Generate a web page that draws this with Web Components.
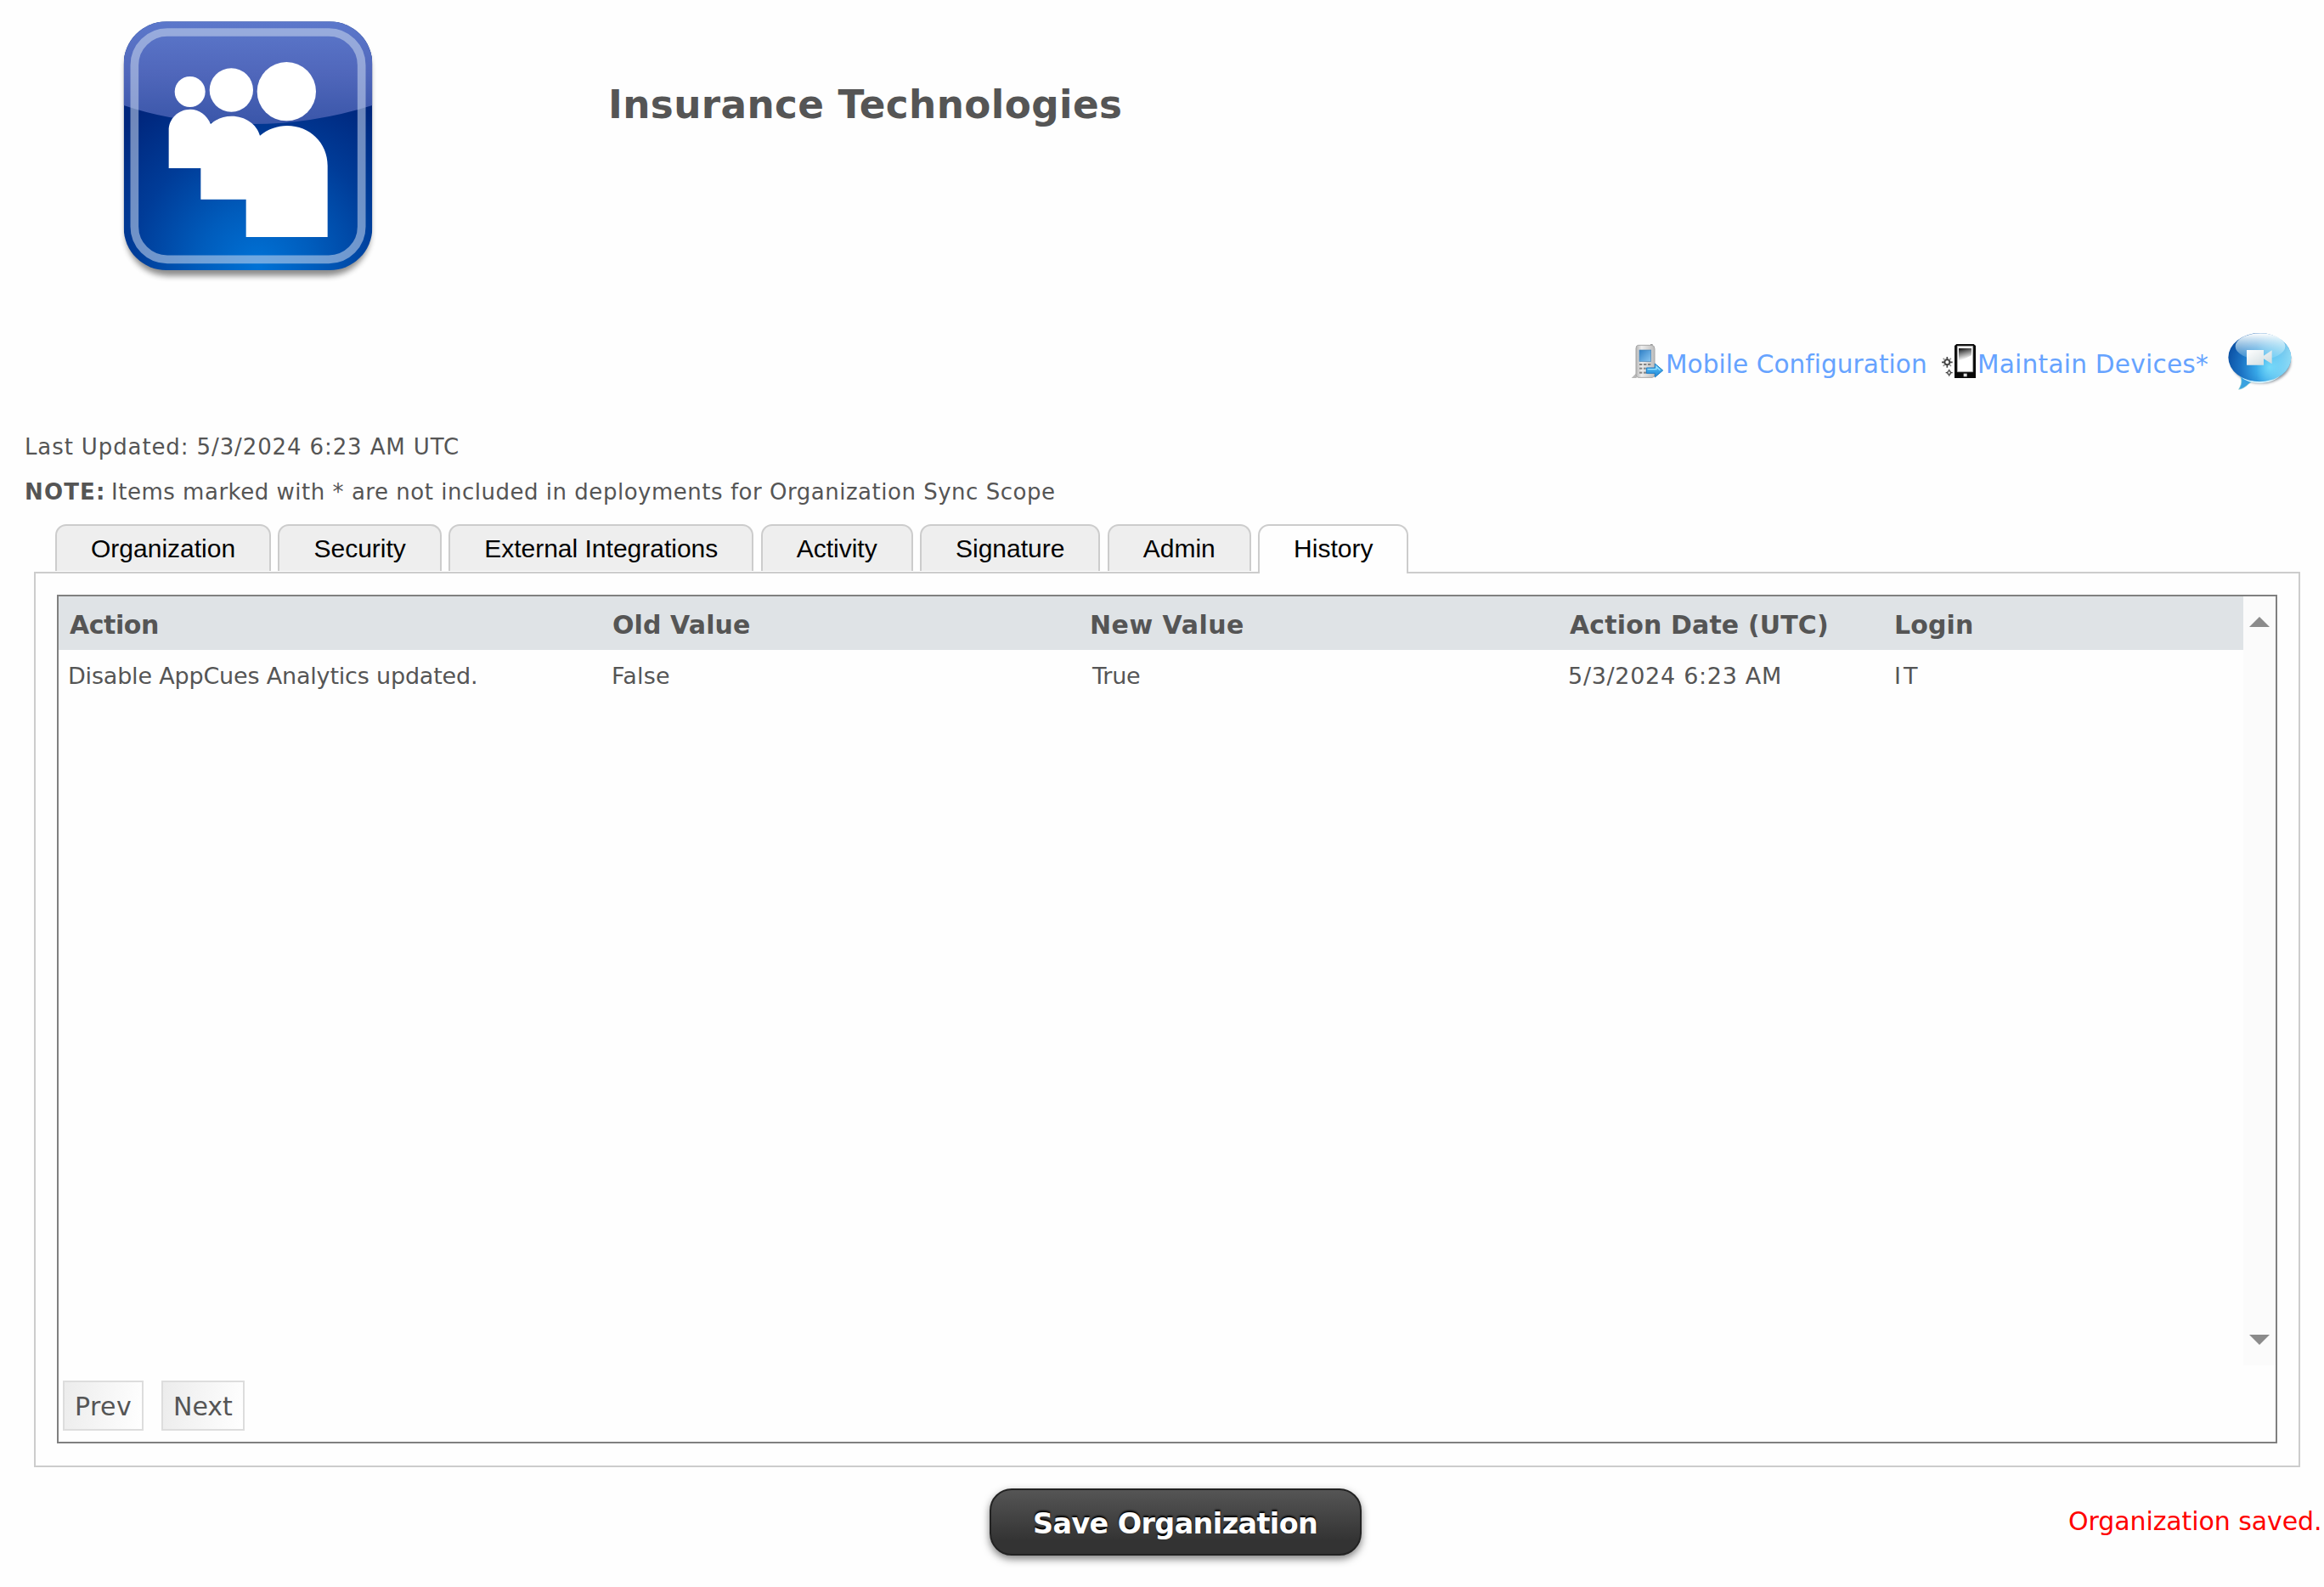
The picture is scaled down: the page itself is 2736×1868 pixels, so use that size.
<!DOCTYPE html>
<html lang="en">
<head>
<meta charset="utf-8">
<title>Insurance Technologies</title>
<style>
html,body{margin:0;padding:0;background:#fefefe}
body{width:2736px;height:1868px;overflow:hidden;font-family:Verdana,"DejaVu Sans",sans-serif;color:#555}
</style>
</head>
<body>
<org-page></org-page>
<script>
const define = (name, html, ready) => {
  const t = document.createElement('template');
  t.innerHTML = html;
  customElements.define(name, class extends HTMLElement {
    connectedCallback() {
      if (this.shadowRoot) return;
      this.attachShadow({mode: 'open'}).append(t.content.cloneNode(true));
      if (ready) ready(this);
    }
  });
};
const ctx = document.createElement('canvas').getContext('2d');

/* Single line of text whose tracking is adjusted so that its ink spans `w` pixels. */
define('fit-text', `<style>:host{display:block;white-space:pre;flex:none}span{display:block}</style><span><slot></slot></span>`, el => {
  const size = +el.getAttribute('size'), w = +el.getAttribute('w'), text = el.textContent;
  const family = el.getAttribute('family') || '"DejaVu Sans"';
  const bold = el.hasAttribute('bold') ? 'bold' : 'normal';
  ctx.font = `${bold} ${size}px ${family}, sans-serif`;
  const m = ctx.measureText(text);
  const ls = (w - (m.actualBoundingBoxRight + m.actualBoundingBoxLeft)) / (text.length - 1);
  el.style.cssText += `;width:${w}px;font:${bold} ${size}px/${el.getAttribute('line') || 40}px ${family},sans-serif;letter-spacing:${ls}px`;
  el.shadowRoot.querySelector('span').style.marginLeft = m.actualBoundingBoxLeft + 'px';
});

define('org-logo', `<style>:host{display:block;width:330px;height:330px}svg{display:block}</style>
<svg width="330" height="330" viewBox="0 0 990 990">
<defs>
<radialGradient id="b" gradientUnits="userSpaceOnUse" cx="520" cy="910" r="680"><stop offset="0" stop-color="#0072d6"/><stop offset=".3" stop-color="#005cbc"/><stop offset=".65" stop-color="#003c98"/><stop offset="1" stop-color="#00267c"/></radialGradient>
<linearGradient id="g" x1="0" y1="0" x2="0" y2="1"><stop offset="0" stop-color="#5c78cb"/><stop offset=".5" stop-color="#5067bb"/><stop offset="1" stop-color="#3a56a9"/></linearGradient>
<clipPath id="c"><rect x="47" y="46" width="878" height="878" rx="150"/></clipPath>
<filter id="s" x="-10%" y="-10%" width="120%" height="120%"><feGaussianBlur stdDeviation="11"/></filter>
</defs>
<rect x="54" y="66" width="864" height="878" rx="150" fill="#000" opacity=".45" filter="url(#s)"/>
<g clip-path="url(#c)"><rect x="47" y="46" width="878" height="878" fill="url(#b)"/>
<path d="M47 46H925V342Q710 410 486 408Q240 408 47 342Z" fill="url(#g)"/></g>
<rect x="85" y="84" width="802" height="802" rx="116" fill="none" stroke="#c8d6ee" stroke-opacity=".56" stroke-width="29"/>
<g fill="#fff"><circle cx="281" cy="294" r="54"/><circle cx="427" cy="288" r="77"/><circle cx="622" cy="293" r="104"/>
<path d="M206 564V430C206 389 240 356 282 356C314 356 341 377 354 408C374 390 400 380 428 380C476 380 517 408 528 449C556 426 590 414 624 414C704 414 767 474 767 555V807H479V674H319V564Z"/></g>
</svg>`);

define('phone-icon', `<style>:host{display:block;flex:none}svg{display:block}</style>
<svg width="39" height="40" viewBox="60 105 117 120">
<defs><linearGradient id="p"><stop offset="0" stop-color="#b5b5b5"/><stop offset=".3" stop-color="#ececec"/><stop offset="1" stop-color="#bdbdbd"/></linearGradient>
<linearGradient id="q" x1="0" y1="0" x2="1" y2="1"><stop offset="0" stop-color="#2e7fc6"/><stop offset="1" stop-color="#8cc8f2"/></linearGradient>
<linearGradient id="a" x1="0" y1="0" x2="0" y2="1"><stop offset="0" stop-color="#5cc6fa"/><stop offset="1" stop-color="#1e86d6"/></linearGradient></defs>
<path d="M62 225L80 207V225Z" fill="#999" opacity=".7"/><rect x="129" y="105" width="8" height="20" fill="#999"/>
<path d="M86 109H134Q144 110 144 122V212Q144 222 136 223H86Q78 222 78 212V120Q78 110 86 109Z" fill="url(#p)" stroke="#a6a6a6" stroke-width="3"/>
<rect x="90" y="126" width="41" height="40" fill="url(#q)" stroke="#4b86b8" stroke-width="2"/>
<g fill="#858585"><rect x="90" y="174" width="10" height="6"/><rect x="105" y="174" width="10" height="6"/><rect x="120" y="174" width="10" height="6"/><rect x="90" y="188" width="10" height="6"/><rect x="105" y="188" width="8" height="6"/><rect x="90" y="203" width="10" height="6"/><rect x="105" y="203" width="10" height="6"/></g>
<path d="M115 189H145V174L173 198L145 222V208H115Z" fill="url(#a)" stroke="#1c7bc4" stroke-width="3" stroke-linejoin="round"/><path d="M119 194H150V185L163 197" fill="none" stroke="#98e2ff" stroke-width="4"/>
</svg>`);

define('device-icon', `<style>:host{display:block;flex:none}svg{display:block}</style>
<svg width="40" height="40" viewBox="48 105 120 120">
<defs><linearGradient id="d" x1=".1" y1="0" x2=".35" y2="1"><stop offset="0" stop-color="#111"/><stop offset=".35" stop-color="#777"/><stop offset=".85" stop-color="#fff"/></linearGradient></defs>
<path d="M100 105H161L168 111V225H93V111Z" fill="#080808"/><path d="M103 112H158V203H103Z" fill="#fff"/><path d="M103 112H158V203H103Z" fill="none" stroke="#aaa" stroke-width="2"/><path d="M108 120H153V145L108 168Z" fill="url(#d)"/>
<rect x="125" y="209" width="12" height="11" fill="#ddd"/>
<g fill="none" stroke="#444"><circle cx="67" cy="169" r="9" stroke-width="6"/><path d="M67 150V160M67 178V188M48 169H58M76 169H86" stroke-width="5"/><path d="M53 155L60 162M74 176L81 183M81 155L74 162M60 176L53 183" stroke-width="4" stroke="#888"/>
<circle cx="74" cy="206" r="5.5" stroke-width="4.5" stroke="#666"/><path d="M74 194V201M74 211V218M62 206H69M79 206H86" stroke-width="4"/></g>
</svg>`);

define('chat-icon', `<style>:host{display:block;flex:none}svg{display:block}</style>
<svg width="80" height="74" viewBox="1050 57 240 222">
<defs><radialGradient id="r" gradientUnits="userSpaceOnUse" cx="1205" cy="190" r="155"><stop offset="0" stop-color="#62d2f8"/><stop offset=".3" stop-color="#38a8e8"/><stop offset=".65" stop-color="#1b73c4"/><stop offset="1" stop-color="#0b4fa2"/></radialGradient>
<linearGradient id="h" x1="0" y1="0" x2="0" y2="1"><stop offset="0" stop-color="#fff"/><stop offset="1" stop-color="#c6f4ff" stop-opacity=".15"/></linearGradient>
<linearGradient id="k" x1="0" y1="0" x2="1" y2="0"><stop offset=".45" stop-color="#9cecff" stop-opacity="0"/><stop offset="1" stop-color="#a8f0ff"/></linearGradient>
<linearGradient id="v" x1="0" y1="0" x2="1" y2="1"><stop offset="0" stop-color="#fff"/><stop offset="1" stop-color="#ccd9dd"/></linearGradient>
<filter id="f" x="-20%" y="-20%" width="140%" height="140%"><feGaussianBlur stdDeviation="5"/></filter></defs>
<ellipse cx="1176" cy="170" rx="105" ry="77" fill="#234" opacity=".5" filter="url(#f)"/>
<path d="M1103 222C1110 240 1106 252 1097 268C1120 265 1130 246 1150 236Z" fill="#3aa2e0" stroke="#8cc" stroke-width="2"/>
<ellipse cx="1171" cy="155" rx="111" ry="86" fill="url(#r)"/>
<ellipse cx="1171" cy="155" rx="111" ry="86" fill="url(#k)" opacity=".8"/>
<path d="M1102 222C1140 248 1210 246 1243 220C1210 254 1135 254 1102 222Z" fill="#d9f6ff"/>
<ellipse cx="1173" cy="116" rx="88" ry="46" fill="url(#h)"/>
<path d="M1125 129H1185V149L1214 130V178L1185 160V182H1125Z" fill="url(#v)"/>
</svg>`);

define('icon-link', `<style>:host{display:flex;align-items:center;color:#66a3ff;flex:none}.t{padding-top:8px}</style><slot name="icon"></slot><div class="t"><slot></slot></div>`);

define('org-tab', `<style>
:host{display:block;flex:none;box-sizing:border-box;height:55px;border:2px solid #ccc;border-bottom:0;border-radius:13px 13px 0 0;background:#eee;color:#000;padding:0 40px;font:30px/53px "Liberation Sans",Arial,sans-serif;white-space:nowrap}
:host([active]){height:58px;margin-bottom:-3px;background:#fefefe;position:relative;z-index:1}
</style><slot></slot>`);

define('pager-button', `<style>:host{display:block;box-sizing:border-box;height:59px;border:2px solid #ddd;background:linear-gradient(100deg,#ececec,#fff);padding:9px 0 0 14px}</style><slot></slot>`);

define('history-grid', `<style>
:host{display:flex;flex-direction:column;box-sizing:border-box;height:999px;border:2px solid #808080}
.scroll{display:flex;height:905px}
.table{flex:1}
.row{display:grid;grid-template-columns:640px 563px 563px 384px 1fr;padding-left:13px;height:62px;padding-top:1px;box-sizing:border-box}
.head{background:#dfe3e6;height:63px;padding-top:2px}
.bar{width:38px;background:#fbfbfb;display:flex;flex-direction:column;justify-content:space-between;align-items:center;box-sizing:border-box;padding:24px 0}
svg{display:block}
.pager{display:flex;gap:21px;padding:18px 0 0 5px}
</style>
<div class="scroll"><div class="table">
<div class="row head">
<fit-text bold size="30" line="63" w="104">Action</fit-text><fit-text bold size="30" line="63" w="160">Old Value</fit-text><fit-text bold size="30" line="63" w="178">New Value</fit-text><fit-text bold size="30" line="63" w="303">Action Date (UTC)</fit-text><fit-text bold size="30" line="63" w="90">Login</fit-text></div>
<div class="row">
<fit-text size="27" line="60" w="478">Disable AppCues Analytics updated.</fit-text><fit-text size="27" line="60" w="66">False</fit-text><fit-text size="27" line="60" w="57">True</fit-text><fit-text size="27" line="60" w="247">5/3/2024 6:23 AM</fit-text><fit-text size="27" line="60" w="26">IT</fit-text></div>
</div>
<div class="bar"><svg width="24" height="12"><path d="M0 12L12 0L24 12Z" fill="#8b8b8b"/></svg><svg width="24" height="12"><path d="M0 0L12 12L24 0Z" fill="#8b8b8b"/></svg></div></div>
<div class="pager"><pager-button style="width:95px"><fit-text size="30" w="64">Prev</fit-text></pager-button><pager-button style="width:98px"><fit-text size="30" w="68">Next</fit-text></pager-button></div>`);

define('save-button', `<style>:host{display:flex;align-items:center;justify-content:center;box-sizing:border-box;width:438px;height:79px;border:2px solid #222;border-radius:26px;padding-top:4px;color:#fff;background:linear-gradient(#555,#333 80%);box-shadow:0 4px 10px rgba(0,0,0,.5);text-shadow:0 -2px 2px #000}</style><slot></slot>`);

define('org-page', `<style>
:host{display:flex;flex-direction:column;height:1868px}
header{display:flex;height:385px;padding:10px 0 0 130px;align-items:flex-start}
header fit-text{margin:84px 0 0 260px}
.tools{display:flex;align-items:center;height:80px}
.notes{display:flex;flex-direction:column;gap:13px;padding:41px 0 0 31px;height:152px}
.note{display:flex;gap:12px}
.tabs{display:flex;align-items:flex-start;gap:8.34px;padding-left:65px;height:56px}
header,.notes{box-sizing:border-box}
.panel{box-sizing:border-box;margin-left:40px;width:2668px;height:1054px;border:2px solid #ccc;padding:25px}
footer{display:flex;align-items:flex-start;padding:25px 5px 0 1165px}
.msg{margin:19px 0 0 auto;color:#f00}
</style>
<header><org-logo></org-logo><fit-text bold size="45.3" line="60" w="599">Insurance Technologies</fit-text></header>
<div class="tools">
<icon-link style="margin-left:1920px"><phone-icon slot="icon"></phone-icon><fit-text style="margin-left:4px" size="29.6" w="304">Mobile Configuration</fit-text></icon-link>
<icon-link style="margin-left:19px"><device-icon slot="icon"></device-icon><fit-text style="margin-left:4px" size="29.6" w="269">Maintain Devices*</fit-text></icon-link>
<chat-icon style="margin-left:21px"></chat-icon></div>
<div class="notes"><fit-text size="26" w="508">Last Updated: 5/3/2024 6:23 AM UTC</fit-text>
<div class="note"><fit-text bold size="26" w="90">NOTE:</fit-text><fit-text size="26" w="1108">Items marked with * are not included in deployments for Organization Sync Scope</fit-text></div></div>
<div class="tabs"><org-tab>Organization</org-tab><org-tab>Security</org-tab><org-tab>External Integrations</org-tab><org-tab>Activity</org-tab><org-tab>Signature</org-tab><org-tab>Admin</org-tab><org-tab active>History</org-tab></div>
<div class="panel"><history-grid></history-grid></div>
<footer><save-button><fit-text bold size="33.4" line="73" w="332">Save Organization</fit-text></save-button><div class="msg"><fit-text size="30" w="295">Organization saved.</fit-text></div></footer>`);
</script>
</body>
</html>
